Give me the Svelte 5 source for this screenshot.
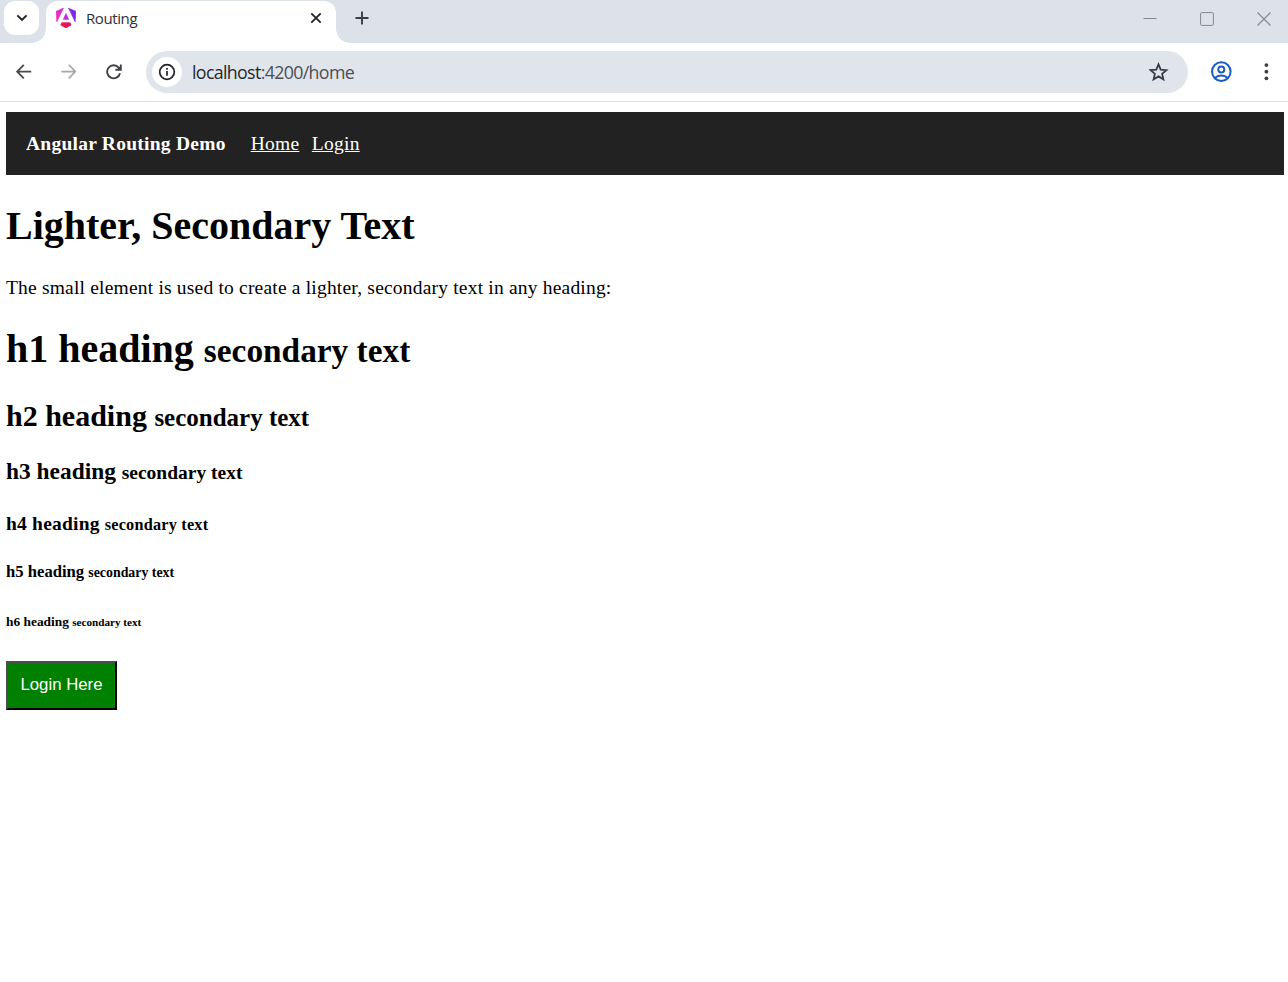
<script>
  const headings = [1, 2, 3, 4, 5, 6];
</script>

<div class="window">
  <header class="tabstrip">
    <button class="search" aria-label="Search tabs">
      <svg width="12" height="8" viewBox="0 0 12 8"><path d="M1.4 1.4 6 5.9l4.6-4.5" fill="none" stroke="#1f2023" stroke-width="2" /></svg>
    </button>
    <div class="tab">
      <svg class="logo" width="20" height="20" viewBox="0 0 223 236" preserveAspectRatio="none">
        <defs>
          <linearGradient id="ng" gradientUnits="userSpaceOnUse" x1="0" y1="100" x2="223" y2="70">
            <stop offset="0" stop-color="#f42db8" />
            <stop offset=".5" stop-color="#c42be0" />
            <stop offset="1" stop-color="#6a22ee" />
          </linearGradient>
          <linearGradient id="ngb" x1="0" y1="0" x2="1" y2="0">
            <stop offset="0" stop-color="#ee1450" />
            <stop offset="1" stop-color="#d41565" />
          </linearGradient>
        </defs>
        <path d="m222.077 39.192-8.019 125.923L137.387 0l84.69 39.192ZM111.039 62.675l30.357 73.803H80.681l30.358-73.803ZM7.937 165.115 0 39.192 84.69 0 7.937 165.115Z" fill="url(#ng)" stroke="url(#ng)" stroke-width="6" />
        <path d="m168.972 202.017-57.933 33.056-57.934-33.056 11.783-28.556h92.301l11.783 28.556Z" fill="url(#ngb)" stroke="url(#ngb)" stroke-width="8" />
      </svg>
      <span class="title">Routing</span>
      <svg class="x" width="12" height="12" viewBox="0 0 12 12"><path d="m1.3 1.3 9.4 9.4m0-9.4-9.4 9.4" stroke="#27282b" stroke-width="1.9" /></svg>
    </div>
    <svg class="plus" width="14" height="14" viewBox="0 0 14 14"><path d="M7 .5v13M.5 7h13" stroke="#3c3d40" stroke-width="1.9" /></svg>
    <div class="controls">
      <svg width="14" height="14" viewBox="0 0 14 14"><path d="M.5 6.5h13" stroke="#85888f" /></svg>
      <svg width="14" height="14" viewBox="0 0 14 14"><rect x=".6" y=".6" width="12.8" height="12.8" rx="1" fill="none" stroke="#85888f" /></svg>
      <svg width="14" height="14" viewBox="0 0 14 14"><path d="m.5.5 13 13m0-13-13 13" stroke="#85888f" stroke-width="1.1" /></svg>
    </div>
  </header>

  <div class="toolbar">
    <svg class="back" width="16" height="16" viewBox="0 0 16 16"><path d="M15.2 7.6H1.5M7.8.8 1.2 7.6l6.6 6.8" fill="none" stroke="#47494d" stroke-width="1.8" /></svg>
    <svg class="forward" width="16" height="16" viewBox="0 0 16 16"><path d="M.4 7.6h13.7M7.8.8l6.6 6.8-6.6 6.8" fill="none" stroke="#a5a6a8" stroke-width="1.6" /></svg>
    <svg class="reload" width="16" height="16" viewBox="0 0 16 16"><path d="M14 9.2A6.5 6.5 0 1 1 12.7 3.7L14.3 5.6M9.4 5.7h5.4V.4" fill="none" stroke="#3f4145" stroke-width="1.9" /><path d="M11 5.7h4V1.8Z" fill="#3f4145" /></svg>
    <div class="omnibox">
      <span class="info">
        <svg width="18" height="18" viewBox="0 0 18 18"><circle cx="9" cy="9" r="7.3" fill="none" stroke="#202124" stroke-width="1.7" /><path d="M9 8.1v4.7M9 5v1.8" stroke="#202124" stroke-width="1.7" /></svg>
      </span>
      <span class="url"><b>localhost</b>:4200/home</span>
      <svg class="star" width="20" height="20" viewBox="0 0 20 20"><path d="m9.5 2.4 2.2 5.2 5.7.5-4.3 3.7 1.3 5.5-4.9-2.9-4.9 2.9 1.3-5.5-4.3-3.7 5.7-.5Z" fill="none" stroke="#3b3d41" stroke-width="1.8" /></svg>
    </div>
    <svg class="profile" width="22" height="22" viewBox="0 0 22 22"><g fill="none" stroke="#1c5bc2" stroke-width="2"><circle cx="11.3" cy="10.6" r="9.3" /><circle cx="11.3" cy="8.4" r="3" /><path d="M5 16.8q6.3-4.5 12.6 0" /></g></svg>
    <svg class="menu" width="6" height="18" viewBox="0 0 6 18"><g fill="#3c3e42"><circle cx="3.4" cy="2.1" r="1.9" /><circle cx="3.4" cy="8.7" r="1.9" /><circle cx="3.4" cy="15.3" r="1.9" /></g></svg>
  </div>

  <main>
    <nav>
      <strong>Angular Routing Demo</strong>
      <a class="home" href="#home">Home</a>
      <a href="#login">Login</a>
    </nav>
    <h1 class="top">Lighter, Secondary Text</h1>
    <p>The small element is used to create a lighter, secondary text in any heading:</p>
    {#each headings as n}
      <svelte:element this={`h${n}`}>h{n} heading <small>secondary text</small></svelte:element>
    {/each}
    <button class="login">Login Here</button>
  </main>
</div>

<style>
  :global(body) { margin: 0; background: #fff; }
  .window { width: 1288px; height: 982px; overflow: hidden; background: #fff; }
  .window * { box-sizing: border-box; }
  svg { display: block; flex: none; }
  .tabstrip { height: 43px; display: flex; align-items: flex-start; background: #dde1e9; }
  .search {
    width: 35px; height: 34px; margin: 1px 0 0 4px; padding: 0; border: 0;
    border-radius: 11px; background: #fff; display: grid; place-items: center;
  }
  .tab {
    position: relative; width: 290px; height: 42px; margin: 1px 0 0 7px; padding: 0 14px 6px 10px;
    display: flex; align-items: center; background: #fff; border-radius: 12px 12px 0 0;
  }
  .tab::before, .tab::after {
    content: ''; position: absolute; bottom: 0; width: 14px; height: 14px;
  }
  .tab::before { left: -14px; background: radial-gradient(circle at 0 0, transparent 13.5px, #fff 14px); }
  .tab::after { right: -14px; background: radial-gradient(circle at 100% 0, transparent 13.5px, #fff 14px); }
  .logo { margin-top: -2px; }
  .title { flex: 1; margin: -2px 0 0 10px; font: 15px/20px "Open Sans", sans-serif; color: #303134; letter-spacing: -.4px; }
  .x { margin-top: -3px; }
  .plus { margin: 11px 0 0 19px; }
  .controls { display: flex; gap: 43px; margin: 12px 17px 0 auto; }
  .toolbar { height: 59px; display: flex; align-items: center; border-bottom: 1px solid #dfe1e4; padding-left: 16px; }
  .forward { margin-left: 29px; }
  .reload { margin-left: 29px; }
  .omnibox {
    width: 1042px; height: 42px; margin-left: 24px; padding: 0 19px 0 6px; border-radius: 21px;
    background: #e0e5ec; display: flex; align-items: center;
  }
  .info { width: 30px; height: 30px; border-radius: 50%; background: #fff; display: grid; place-items: center; }
  .url { flex: 1; margin-left: 10px; font: 17.8px/24px "Open Sans", sans-serif; color: #4b4f55; letter-spacing: -.65px; }
  .url b { font-weight: 400; color: #25272b; }
  .profile { margin-left: 22px; }
  .menu { margin-left: 31px; }

  main { padding: 10px 4px 0 6px; font-family: "Liberation Serif", "Times New Roman", serif; color: #000; }
  nav {
    height: 63px; padding-left: 20px; display: flex; align-items: center; background: #222; color: #fff;
    font-size: 19.5px; line-height: 22px; letter-spacing: .25px;
  }
  nav a { color: #fff; margin-left: 12.5px; text-decoration: underline; }
  nav a.home { margin-left: 25px; }
  h1, h2, h3, h4, h5, h6, p { margin: 0; white-space: nowrap; }
  small { font-size: .8333em; }
  h1 { font-size: 40px; line-height: 44px; margin-top: 28px; }
  h1.top { margin-top: 29px; }
  p { font-size: 19.5px; line-height: 22px; margin-top: 29px; letter-spacing: .194px; }
  h2 { font-size: 30px; line-height: 34px; margin-top: 26px; }
  h3 { font-size: 23.4px; line-height: 26px; margin-top: 23px; }
  h4 { font-size: 19.5px; line-height: 22px; margin-top: 27px; letter-spacing: .21px; }
  h5 { font-size: 16.65px; line-height: 18px; margin-top: 27px; }
  h6 { font-size: 13.4px; line-height: 16px; margin-top: 32px; }
  .login {
    display: block; width: 111px; height: 49px; margin-top: 31px; padding: 0 0 2px;
    border: 2px solid; border-color: #4c4c4c #000 #000 #4c4c4c;
    background: #008000; color: #fff; font: 16.8px "Liberation Sans", Arial, sans-serif; white-space: nowrap;
  }
</style>
